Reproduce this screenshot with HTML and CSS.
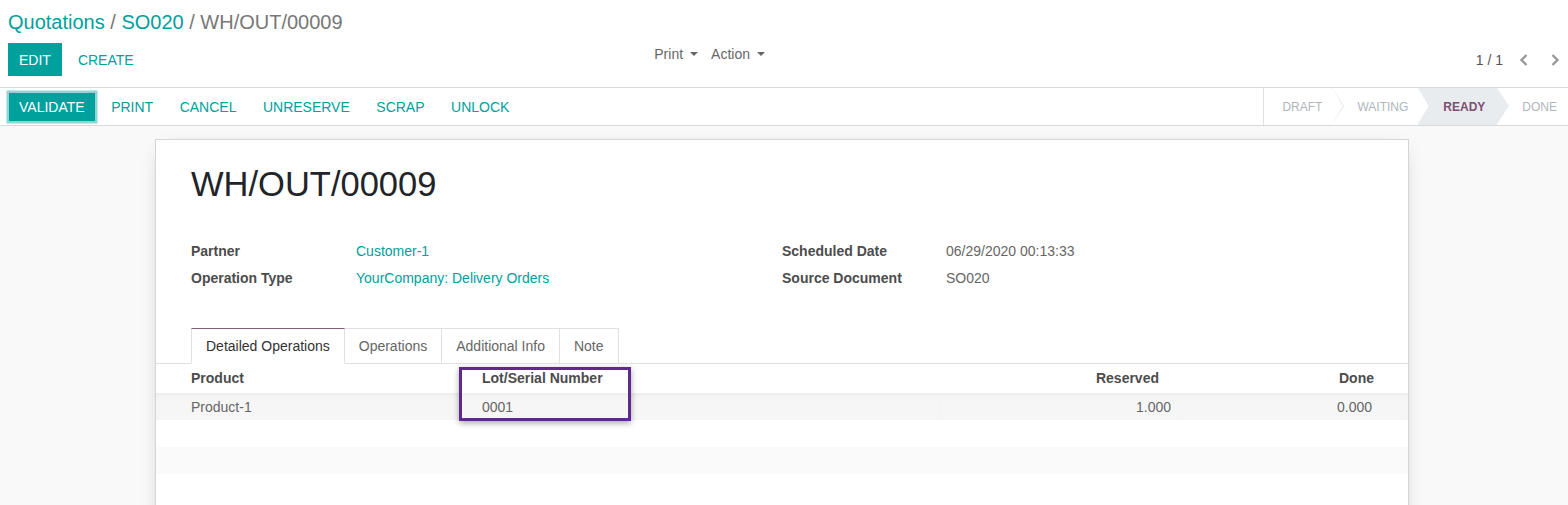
FILE: index.html
```html
<!DOCTYPE html>
<html>
<head>
<meta charset="utf-8">
<link rel="stylesheet" href="styles.css">
</head>
<body>
<div class="cp">
  <div class="breadcrumb">
    <a class="bc-link">Quotations</a><span class="bc-sep"> / </span><a class="bc-link">SO020</a><span class="bc-sep"> / </span><span class="bc-active">WH/OUT/00009</span>
  </div>
  <div class="cp-row">
    <div class="cp-left">
      <div class="cp-buttons">
        <span class="btn btn-primary">EDIT</span>
        <span class="btn btn-link">CREATE</span>
      </div>
      <div class="cp-sidebar">
        <span class="dd">Print<span class="caret"></span></span>
        <span class="dd">Action<span class="caret"></span></span>
      </div>
    </div>
    <div class="cp-right">
      <span class="pager-val">1 / 1</span>
      <span class="pager-btn pager-prev"><svg width="12" height="14" viewBox="0 0 12 14"><path d="M8.5 2 L3.5 7 L8.5 12" fill="none" stroke="#9a9a9a" stroke-width="2.4"/></svg></span>
      <span class="pager-btn pager-next"><svg width="12" height="14" viewBox="0 0 12 14"><path d="M3.5 2 L8.5 7 L3.5 12" fill="none" stroke="#9a9a9a" stroke-width="2.4"/></svg></span>
    </div>
  </div>
</div>
<div class="statusbar">
  <div class="sb-buttons">
    <span class="sbtn sbtn-primary">VALIDATE</span>
    <span class="sbtn">PRINT</span>
    <span class="sbtn">CANCEL</span>
    <span class="sbtn">UNRESERVE</span>
    <span class="sbtn">SCRAP</span>
    <span class="sbtn">UNLOCK</span>
  </div>
  <div class="sb-status">
    <span class="st st-first">DRAFT</span>
    <span class="st">WAITING</span>
    <span class="st st-current">READY</span>
    <span class="st st-last">DONE</span>
  </div>
</div>
<div class="form-bg">
  <div class="sheet">
    <h1 class="title">WH/OUT/00009</h1>
    <div class="groups">
      <div class="group">
        <div class="lbl">Partner</div><div class="val link">Customer-1</div>
        <div class="lbl">Operation Type</div><div class="val link">YourCompany: Delivery Orders</div>
      </div>
      <div class="group">
        <div class="lbl">Scheduled Date</div><div class="val">06/29/2020 00:13:33</div>
        <div class="lbl">Source Document</div><div class="val">SO020</div>
      </div>
    </div>
    <div class="notebook">
      <div class="tabs">
        <span class="tab active">Detailed Operations</span>
        <span class="tab">Operations</span>
        <span class="tab">Additional Info</span>
        <span class="tab">Note</span>
      </div>
      <div class="table-wrap">
        <table class="lines">
          <colgroup>
            <col class="c1"><col class="c2"><col class="c3"><col class="c4">
          </colgroup>
          <thead>
            <tr>
              <th class="first">Product</th>
              <th>Lot/Serial Number</th>
              <th class="num hnum">Reserved</th>
              <th class="num last">Done</th>
            </tr>
          </thead>
          <tbody>
            <tr class="r1">
              <td class="first">Product-1</td>
              <td>0001</td>
              <td class="num">1.000</td>
              <td class="num last vlast">0.000</td>
            </tr>
            <tr class="r2"><td></td><td></td><td></td><td></td></tr>
            <tr class="r3"><td></td><td></td><td></td><td></td></tr>
          </tbody>
        </table>
        <div class="highlight"></div>
      </div>
    </div>
  </div>
</div>
</body>
</html>
```
FILE: styles.css
```css
* { box-sizing: border-box; }
html, body { margin: 0; padding: 0; }
body {
  font-family: "Liberation Sans", Arial, sans-serif;
  font-size: 14px;
  color: #4c4c4c;
  background: #fff;
  width: 1568px;
  height: 505px;
  overflow: hidden;
}

/* control panel */
.cp {
  padding: 7px 7px 11px 8px;
  border-bottom: 1px solid #d9d9d9;
}
.breadcrumb {
  font-size: 20px;
  line-height: 30px;
  white-space: nowrap;
}
.bc-link { color: #00a09d; }
.bc-sep { color: #777; }
.bc-active { color: #777; }

.cp-row {
  margin-top: 6px;
  display: flex;
  height: 33px;
}
.cp-left {
  width: 777px;
  display: flex;
  justify-content: space-between;
}
.cp-buttons { display: flex; gap: 5px; }
.btn {
  display: inline-flex;
  align-items: center;
  height: 33px;
  padding: 0 11px;
  font-size: 14px;
}
.btn-primary { background: #00a09d; color: #fff; }
.btn-link { color: #00a09d; }
.cp-sidebar {
  display: flex;
  gap: 13px;
  align-self: flex-start;
  line-height: 22px;
  color: #666;
  padding-right: 20px;
}
.dd { display: inline-flex; align-items: center; }
.caret {
  display: inline-block;
  width: 0; height: 0;
  margin-left: 7px;
  border-left: 4.5px solid transparent;
  border-right: 4.5px solid transparent;
  border-top: 4.5px solid #666;
}
.cp-right {
  flex: 1;
  display: flex;
  justify-content: flex-end;
  align-items: center;
  color: #555;
}
.pager-btn { display: inline-flex; }
.pager-prev { margin-left: 14px; }
.pager-next { margin-left: 19px; }
.pager-val { margin-right: 1px; }

/* statusbar */
.statusbar {
  display: flex;
  justify-content: space-between;
  height: 38px;
  border-bottom: 1px solid #d9d9d9;
  background: #fff;
}
.sb-buttons {
  display: flex;
  align-items: center;
  gap: 6.5px;
  padding-left: 9px;
}
.sbtn {
  display: inline-flex;
  align-items: center;
  height: 28px;
  padding: 0 10px;
  color: #00a09d;
  font-size: 14px;
}
.sbtn-primary {
  background: #00a09d;
  color: #fff;
  box-shadow: 0 0 0 2.5px #8ed5d3;
}
.sb-status {
  display: flex;
  height: 37px;
  border-left: 1px solid #dee2e6;
}
.st {
  position: relative;
  display: flex;
  align-items: center;
  padding: 0 10px 0 25px;
  font-size: 12px;
  color: #b0b6bd;
  background: #fff;
}
.st-first { padding-left: 18px; }
.st-last { padding-right: 11px; }
.st::before, .st::after {
  content: "";
  position: absolute;
  top: 0;
  border-top: 18.5px solid transparent;
  border-bottom: 18.5px solid transparent;
  z-index: 2;
}
.st::before { right: -12px; border-left: 12px solid #dee2e6; }
.st::after { right: -11px; border-left: 11px solid #fff; }
.st-last::before, .st-last::after { display: none; }
.st-current {
  background: #e9ecef;
  color: #7b4f71;
  font-weight: bold;
  padding-right: 12px;
}
.st-current::before { border-left-color: #e9ecef; }
.st-current::after { border-left-color: #e9ecef; }

/* form */
.form-bg {
  background: #f9f9f9;
  height: 379px;
  padding-top: 13px;
  overflow: hidden;
}
.sheet {
  width: 1254px;
  margin-left: 155px;
  background: #fff;
  border: 1px solid #d5d5d5;
  box-shadow: 0 5px 20px -10px rgba(0,0,0,.35);
  padding: 24px 35px 0 35px;
  height: 420px;
}
.title {
  margin: 0;
  font-weight: normal;
  font-size: 34.5px;
  line-height: 41px;
  color: #212529;
}
.groups {
  display: flex;
  margin-top: 32px;
}
.group {
  width: 591px;
  display: grid;
  grid-template-columns: 165px 1fr;
  grid-auto-rows: 27px;
  align-items: center;
}
.group + .group { grid-template-columns: 164px 1fr; }
.lbl { font-weight: bold; color: #4c4c4c; }
.val { color: #666; }
.val.link { color: #00a09d; }

.notebook { margin-top: 37px; }
.tabs {
  display: flex;
  height: 36px;
  margin: 0 -35px;
  padding-left: 35px;
  border-bottom: 1px solid #dee2e6;
}
.tab {
  display: flex;
  align-items: center;
  height: 36px;
  padding: 0 14px;
  border: 1px solid #dee2e6;
  border-left: none;
  color: #666;
  background: #fff;
}
.tab.active {
  border-left: 1px solid #dee2e6;
  border-top: 1px solid #875a7b;
  border-bottom-color: #fff;
  color: #333;
}

.table-wrap {
  position: relative;
  margin: -1px -35px 0;
}
.lines {
  width: 1252px;
  border-collapse: collapse;
  table-layout: fixed;
}
.c1 { width: 314px; }
.c2 { width: 470px; }
.c3 { width: 243px; }
.c4 { width: 225px; }
.lines th, .lines td {
  padding: 0 12px;
  text-align: left;
  white-space: nowrap;
}
.lines th {
  height: 30px;
  font-weight: bold;
  color: #4c4c4c;
}
.lines td { height: 27px; color: #666; }
.lines .first { padding-left: 35px; }
.lines .num { text-align: right; }
.lines .hnum { padding-right: 24px; }
.lines .last { padding-right: 34px; }
.lines .vlast { padding-right: 36px; }
.r1 td {
  background: #f6f6f6;
  box-shadow: inset 0 5px 5px -3px rgba(0,0,0,.05);
}
.r3 td { background: #fafafa; }

.highlight {
  position: absolute;
  left: 303px;
  top: 4px;
  width: 172px;
  height: 54px;
  border: 3px solid #5f2a8c;
  box-shadow: 0 2px 6px rgba(0,0,0,.35);
}
```
